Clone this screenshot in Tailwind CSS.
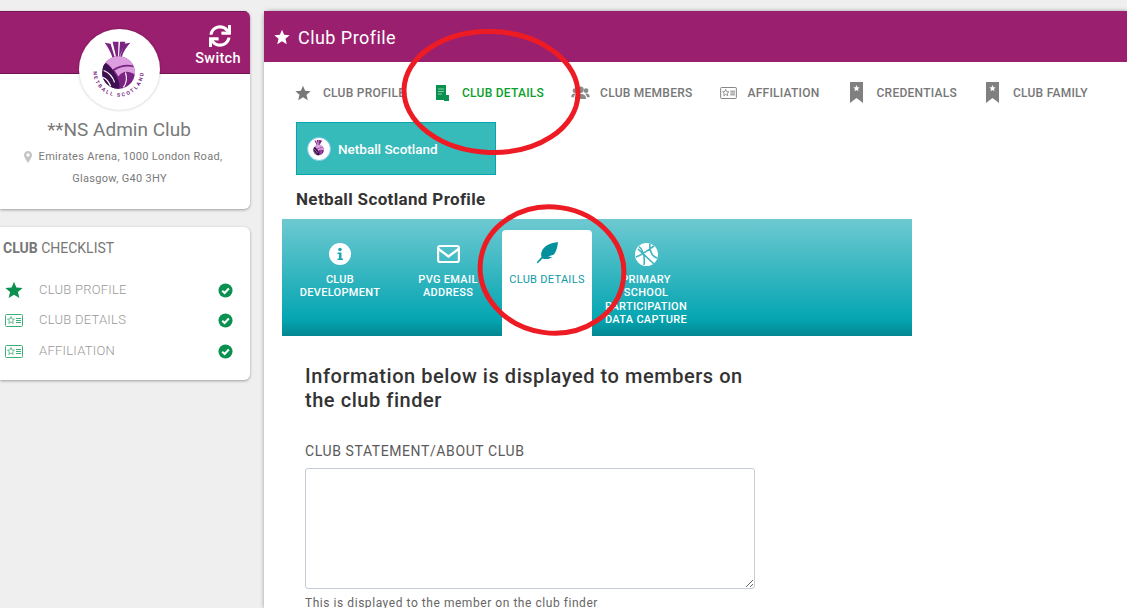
<!DOCTYPE html>
<html lang="en">
<head>
  <meta charset="UTF-8"/>
  <title>Club Profile</title>
  <script src="https://cdn.jsdelivr.net/npm/@tailwindcss/browser@4"></script>
</head>
<body class="bg-[#efefef] font-['Roboto',sans-serif] overflow-hidden">

  <svg width="0" height="0" class="absolute">
    <symbol id="logo" viewBox="0 0 82 82">
      <path d="M26 14 L32 15 L36 28 L34 29 C32 24 30 19 26 14Z M34 13 L40 13 L39.500 28 L37.500 28Z M41.500 13 L47 13 L41 28 L40.500 28Z M52 14 C48 18 45 23 43 29 L41.500 28 L46 15Z" fill="#7b2382"/>
      <circle cx="40" cy="44" r="16.500" fill="#7b2382"/>
      <path d="M27 34 A16.500 16.500 0 0 1 55 37 C48 35 40 37 34 41 C32 38 30 36 27 34Z" fill="#dd9ee0"/>
      <path d="M36 42 C42 38 50 37 56 39 Q57 42 56.500 46 C50 42 44 42 40 48Z" fill="#dd9ee0"/>
      <path d="M24 41 C24 38 25 36 27 35 C33 39 38 46 40 53 C41 56 41 58 41 60.500 C31 61 23 53 23.500 44Z" fill="#3d1150"/>
      <path d="M25 42 C30 44 34 48 36 54 M24 49 C27 50 30 53 32 58" stroke="#fff" stroke-width="1.300" fill="none"/>
      <path d="M47 44 C49 50 48 55 45 59" stroke="#fff" stroke-width="1.200" fill="none"/>
    </symbol>
    <symbol id="idcard" viewBox="0 0 18 13">
      <rect x="0.500" y="0.500" width="17" height="12" rx="1" fill="none" stroke="currentColor"/>
      <path d="M6 2.500 L7 5 L9.500 5.200 L7.600 6.800 L8.200 9.500 L6 8 L3.800 9.500 L4.400 6.800 L2.500 5.200 L5 5Z" fill="none" stroke="currentColor" stroke-width="0.800"/>
      <path d="M11 4.500 H16 M11 6.500 H16 M11 8.500 H16" stroke="currentColor" stroke-width="1"/>
    </symbol>
    <symbol id="ribbon" viewBox="0 0 13 21">
      <path d="M0 0 H13 V21 L6.500 16 L0 21Z" fill="currentColor"/>
      <path d="M6.500 3 L7.400 5.300 L9.700 5.400 L7.900 6.900 L8.500 9.200 L6.500 7.900 L4.500 9.200 L5.100 6.900 L3.300 5.400 L5.600 5.300Z" fill="#fff"/>
    </symbol>
    <symbol id="star" viewBox="0 0 24 24">
      <path d="M12 1 L15.200 8.700 L23.500 9.300 L17.200 14.700 L19.200 22.800 L12 18.400 L4.800 22.800 L6.800 14.700 L0.500 9.300 L8.800 8.700Z" fill="currentColor"/>
    </symbol>
    <symbol id="check" viewBox="0 0 16 16">
      <circle cx="8" cy="8" r="7.500" fill="#0a9150"/>
      <path d="M4.500 8.200 L7 10.600 L11.600 5.800" fill="none" stroke="#fff" stroke-width="2.200"/>
    </symbol>
  </svg>

  <div class="flex h-[608px]">

    <!-- Left column -->
    <div class="w-[250px] shrink-0 pt-[11px]">
      <div class="relative h-[198px] bg-white rounded-br-md rounded-tr-md shadow-[0_1px_3px_rgba(0,0,0,0.35)] overflow-hidden">
        <div class="h-[63px] bg-[#9b1f6f] border-b border-[#6e1450] border-t border-t-[#7a1758] flex justify-end">
          <div class="w-[46px] mr-[9px] flex flex-col items-center text-white">
            <svg class="w-[22px] h-[22px] mt-[13px] ml-[4px]" viewBox="0 0 512 512" fill="currentColor"><path d="M440.650 12.570l4 82.770A247.160 247.160 0 0 0 255.830 8C134.730 8 33.910 94.920 12.290 209.820A12 12 0 0 0 24.090 224h49.050a12 12 0 0 0 11.670-9.260 175.910 175.910 0 0 1 317-56.940l-101.460-4.860a12 12 0 0 0-12.570 12v47.410a12 12 0 0 0 12 12H500a12 12 0 0 0 12-12V12a12 12 0 0 0-12-12h-47.370a12 12 0 0 0-11.980 12.570zM255.830 432a175.610 175.610 0 0 1-146-77.800l101.800 4.870a12 12 0 0 0 12.570-12v-47.400a12 12 0 0 0-12-12H12a12 12 0 0 0-12 12V500a12 12 0 0 0 12 12h47.350a12 12 0 0 0 12-12.600l-4.150-82.570A247.170 247.170 0 0 0 255.830 504c121.110 0 221.930-86.920 243.550-201.820a12 12 0 0 0-11.800-14.180h-49.050a12 12 0 0 0-11.670 9.260A175.860 175.860 0 0 1 255.830 432z"/></svg>
            <span class="text-[14.500px] leading-[16px] tracking-[0.3px] font-medium mt-[4px] whitespace-nowrap">Switch</span>
          </div>
        </div>
        <div class="absolute left-[79px] top-[18px] w-[81px] h-[81px] rounded-full bg-white shadow-[0_0_3px_rgba(0,0,0,0.25)]">
          <svg class="w-[81px] h-[81px]" viewBox="0 0 82 82">
            <use href="#logo"/>
            <path id="logoArc" d="M14.500 43 A25.500 25.500 0 0 0 65.500 43" fill="none"/>
            <text font-family="Roboto, sans-serif" font-size="5.200" font-weight="700" fill="#7b2382"><textPath href="#logoArc" textLength="78">NETBALL SCOTLAND</textPath></text>
          </svg>
        </div>
        <div class="pt-[44px] pr-[12px] text-center text-[#7a7a7a]">
          <div class="text-[19px] leading-[24px]">**NS Admin Club</div>
          <div class="mt-[4px] text-[11px] leading-[22px] tracking-[0.3px]">
            <div class="flex justify-center items-center gap-[7px] pl-[8px]">
              <svg class="w-[8px] h-[12px] text-[#c4c4c4]" viewBox="0 0 8 12" fill="currentColor"><path fill-rule="evenodd" d="M4 0 C6.200 0 8 1.700 8 4 C8 6.500 5.200 10 4 12 C2.800 10 0 6.500 0 4 C0 1.700 1.800 0 4 0Z M4 2.300 A1.700 1.700 0 1 0 4 5.700 A1.700 1.700 0 1 0 4 2.300Z"/></svg>
              <span>Emirates Arena, 1000 London Road,</span>
            </div>
            <div class="pl-[1px]">Glasgow, G40 3HY</div>
          </div>
        </div>
      </div>

      <div class="mt-[18px] h-[153px] bg-white rounded-br-md rounded-tr-md shadow-[0_1px_3px_rgba(0,0,0,0.35)] pl-[3px] pr-[17px] pt-[13px]">
        <div class="text-[14px] leading-[16px] text-[#777]"><b class="font-bold">CLUB</b> CHECKLIST</div>
        <div class="mt-[19px] text-[13px] tracking-[0.25px] text-[#999] font-light">
          <div class="flex items-center h-[30px]">
            <svg class="w-[18px] h-[18px] ml-[2px] text-[#0a9150]"><use href="#star"/></svg>
            <span class="ml-[16px] flex-1">CLUB PROFILE</span>
            <svg class="w-[15px] h-[15px]"><use href="#check"/></svg>
          </div>
          <div class="flex items-center h-[30px]">
            <svg class="w-[18px] h-[13px] ml-[2px] text-[#3fae78]"><use href="#idcard"/></svg>
            <span class="ml-[16px] flex-1">CLUB DETAILS</span>
            <svg class="w-[15px] h-[15px]"><use href="#check"/></svg>
          </div>
          <div class="flex items-center h-[32px]">
            <svg class="w-[18px] h-[13px] ml-[2px] text-[#3fae78]"><use href="#idcard"/></svg>
            <span class="ml-[16px] flex-1">AFFILIATION</span>
            <svg class="w-[15px] h-[15px]"><use href="#check"/></svg>
          </div>
        </div>
      </div>
    </div>

    <!-- Main panel -->
    <div class="ml-[14px] mt-[11px] flex-1 bg-white rounded-tl-md shadow-[0_0_4px_rgba(0,0,0,0.35)]">
      <div class="h-[51px] bg-[#9b1f6f] flex items-center pl-[10px] pt-[1px] text-white">
        <svg class="w-[16px] h-[16px]"><use href="#star"/></svg>
        <span class="ml-[8px] text-[18px] tracking-[0.45px]">Club Profile</span>
      </div>

      <!-- Tabs -->
      <div class="flex items-center h-[60px] pl-[31px] pt-[1px] text-[12px] tracking-[0.25px] font-medium text-[#777] whitespace-nowrap">
        <svg class="w-[16px] h-[16px] shrink-0 text-[#777]"><use href="#star"/></svg>
        <span class="ml-[12px] w-[80px]">CLUB PROFILE</span>
        <svg class="ml-[33px] w-[13px] h-[16px] shrink-0" viewBox="0 0 13 16"><path d="M0 0 H10 V10 H8 V15 H0Z" fill="#0a9150"/><path d="M2 4 H8 M2 6.500 H8 M2 9 H6" stroke="#7fd0a6" stroke-width="1"/><rect x="8" y="10" width="5" height="6" fill="#0a9150"/></svg>
        <span class="ml-[13px] text-[#0aa02c]">CLUB DETAILS</span>
        <svg class="ml-[27px] w-[19px] h-[13px] shrink-0 text-[#8a8a8a]" viewBox="0 0 20 14" fill="currentColor"><circle cx="10" cy="4" r="3.500"/><circle cx="4" cy="5" r="2.500"/><circle cx="16" cy="5" r="2.500"/><path d="M4 14 C4 10 6 8.500 10 8.500 C14 8.500 16 10 16 14Z M0 12 C0 9 1.500 8 4 8 L5 8.500 C3.500 9.500 3 11 3 12Z M20 12 C20 9 18.500 8 16 8 L15 8.500 C16.500 9.500 17 11 17 12Z"/></svg>
        <span class="ml-[10px]">CLUB MEMBERS</span>
        <svg class="ml-[27px] w-[17px] h-[12px] shrink-0 text-[#777]"><use href="#idcard"/></svg>
        <span class="ml-[11px]">AFFILIATION</span>
        <svg class="ml-[30px] w-[13px] h-[21px] shrink-0 text-[#808080]"><use href="#ribbon"/></svg>
        <span class="ml-[14px]">CREDENTIALS</span>
        <svg class="ml-[29px] w-[13px] h-[21px] shrink-0 text-[#808080]"><use href="#ribbon"/></svg>
        <span class="ml-[14px]">CLUB FAMILY</span>
      </div>

      <!-- Org button -->
      <div class="ml-[32px] w-[200px] h-[53px] bg-[#37baba] border border-[#06a5b0] flex items-center pl-[10px] text-white text-[13.500px] font-medium">
        <span class="w-[24px] h-[24px] rounded-full bg-white border border-[#7ec8e8] flex items-center justify-center overflow-hidden">
          <svg class="w-[26px] h-[26px] shrink-0"><use href="#logo"/></svg>
        </span>
        <span class="ml-[7px] pt-[2px]">Netball Scotland</span>
      </div>

      <div class="ml-[32px] mt-[14px] text-[17px] leading-[20px] tracking-[0.35px] font-bold text-[#333]">Netball Scotland Profile</div>

      <!-- Teal tab strip -->
      <div class="ml-[18px] mt-[10px] w-[630px] h-[117px] flex items-end pl-[4px] bg-[linear-gradient(to_bottom,#6ec9d1_0%,#05a6b2_85%,#028791_100%)] text-white text-[11px] leading-[13.330px] tracking-[0.3px] font-medium text-center">
        <div class="w-[108px] h-[106px] flex flex-col items-center pt-[13px]">
          <svg class="w-[22px] h-[22px]" viewBox="0 0 22 22"><circle cx="11" cy="11" r="11" fill="#fff"/><circle cx="11" cy="6.500" r="1.800" fill="#1fa8b4"/><path d="M8.500 9.500 H12.500 V15.500 H14 V17 H8.500 V15.500 H10 V11 H8.500Z" fill="#1fa8b4"/></svg>
          <span class="mt-[8px]">CLUB<br/>DEVELOPMENT</span>
        </div>
        <div class="w-[108px] h-[106px] flex flex-col items-center pt-[13px]">
          <svg class="w-[23px] h-[22px]" viewBox="0 0 23 22" fill="none" stroke="#fff" stroke-width="2.200"><rect x="1.100" y="3" width="20.800" height="16" rx="2"/><path d="M1.500 6 L11.500 13.500 L21.500 6"/></svg>
          <span class="mt-[8px]">PVG EMAIL<br/>ADDRESS</span>
        </div>
        <div class="w-[90px] h-[106px] bg-white rounded-t-[4px] flex flex-col items-center pt-[12px] text-[#0e9aa6] font-normal">
          <svg class="w-[23px] h-[23px] ml-[1px]" viewBox="0 0 23 23" fill="#03919e"><path d="M22 0 C15 1 8 3 5.500 10 C5 12 5 13 5.500 15 L1 20 L1.500 21.500 L6.500 16.500 C9 17.500 13 17.500 16 15 L12 14.500 L18 12.500 C20.500 9 21.500 5 22 0Z"/></svg>
          <span class="mt-[8px]">CLUB DETAILS</span>
        </div>
        <div class="w-[108px] h-[106px] flex flex-col items-center pt-[13px]">
          <svg class="w-[23px] h-[23px]" viewBox="0 0 23 23"><circle cx="11.500" cy="11.500" r="11.500" fill="#fff"/><path d="M4 3.500 C9 8 10 14 9 22 M19 3 C13 7 7 12 1 14 M15 0.500 C14 7 17 14 22.500 15 M3 6 L19 21" stroke="#3fb5bf" stroke-width="1.600" fill="none"/></svg>
          <span class="mt-[7px]">PRIMARY<br/>SCHOOL<br/>PARTICIPATION<br/>DATA CAPTURE</span>
        </div>
      </div>

      <!-- Form -->
      <div class="ml-[41px] w-[450px]">
        <h2 class="mt-[28px] w-[445px] text-[20px] leading-[24px] font-medium tracking-[0.55px] text-[#333]">Information below is displayed to members on the club finder</h2>
        <label class="block mt-[31px] text-[14px] leading-[16px] tracking-[0.6px] text-[#5a5a5a]">CLUB STATEMENT/ABOUT CLUB</label>
        <textarea class="block mt-[9px] w-[450px] h-[121px] border border-[#c5ccd6] rounded-[3px] bg-white"></textarea>
        <div class="mt-[7px] text-[12px] leading-[14px] tracking-[0.55px] text-[#666]">This is displayed to the member on the club finder</div>
      </div>
    </div>
  </div>

  <!-- Hand-drawn annotation circles -->
  <svg class="absolute left-0 top-0 pointer-events-none" width="1127" height="608" fill="none" stroke="#ed1c24" stroke-width="5">
    <ellipse cx="491" cy="92" rx="87" ry="60.500" transform="rotate(2 491 92)"/>
    <ellipse cx="552" cy="270" rx="72" ry="63" transform="rotate(8 552 270)"/>
  </svg>

</body>
</html>
